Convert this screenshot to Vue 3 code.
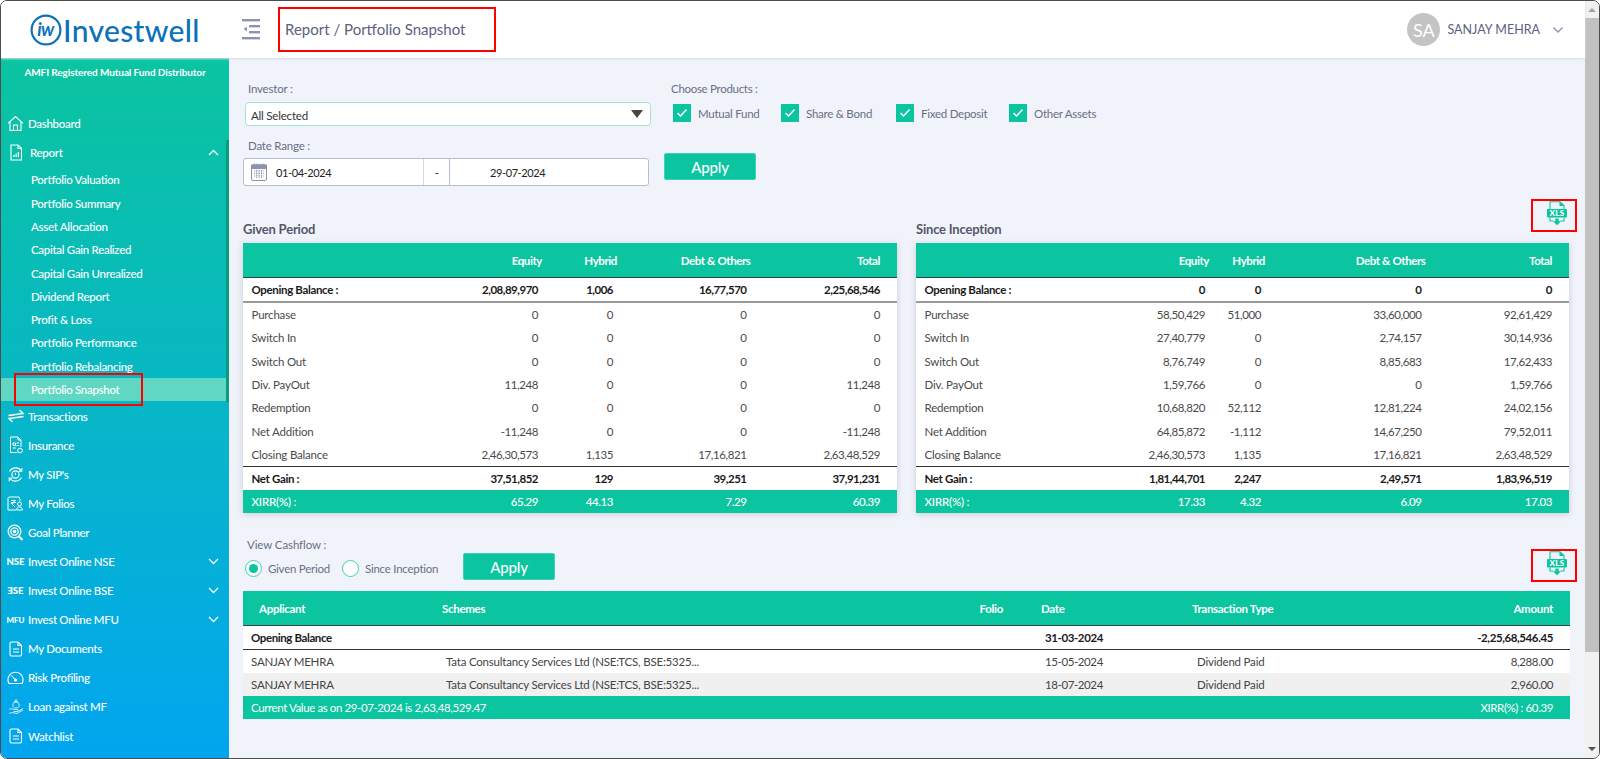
<script setup>
const subs = ['Portfolio Valuation','Portfolio Summary','Asset Allocation','Capital Gain Realized','Capital Gain Unrealized','Dividend Report','Profit & Loss','Portfolio Performance','Portfolio Rebalancing','Portfolio Snapshot']
const navBottom = [
  { t:'Transactions', i:'swap' },{ t:'Insurance', i:'ins' },{ t:"My SIP's", i:'sip' },{ t:'My Folios', i:'fol' },{ t:'Goal Planner', i:'goal' },
  { t:'Invest Online NSE', c:'NSE', chev:true },{ t:'Invest Online BSE', c:'ƎSE', chev:true },{ t:'Invest Online MFU', c:'MFU', small:true, chev:true },
  { t:'My Documents', i:'doc' },{ t:'Risk Profiling', i:'risk' },{ t:'Loan against MF', i:'loan' },{ t:'Watchlist', i:'doc' }
]
const products = ['Mutual Fund','Share & Bond','Fixed Deposit','Other Assets']
const given = {
  title:'Given Period', cls:'given',
  open:['2,08,89,970','1,006','16,77,570','2,25,68,546'],
  rows:[['Purchase','0','0','0','0'],['Switch In','0','0','0','0'],['Switch Out','0','0','0','0'],['Div. PayOut','11,248','0','0','11,248'],['Redemption','0','0','0','0'],['Net Addition','-11,248','0','0','-11,248'],['Closing Balance','2,46,30,573','1,135','17,16,821','2,63,48,529']],
  gain:['37,51,852','129','39,251','37,91,231'], xirr:['65.29','44.13','7.29','60.39']
}
const since = {
  title:'Since Inception', cls:'since',
  open:['0','0','0','0'],
  rows:[['Purchase','58,50,429','51,000','33,60,000','92,61,429'],['Switch In','27,40,779','0','2,74,157','30,14,936'],['Switch Out','8,76,749','0','8,85,683','17,62,433'],['Div. PayOut','1,59,766','0','0','1,59,766'],['Redemption','10,68,820','52,112','12,81,224','24,02,156'],['Net Addition','64,85,872','-1,112','14,67,250','79,52,011'],['Closing Balance','2,46,30,573','1,135','17,16,821','2,63,48,529']],
  gain:['1,81,44,701','2,247','2,49,571','1,83,96,519'], xirr:['17.33','4.32','6.09','17.03']
}
const tables = [given, since]
const heads = ['Equity','Hybrid','Debt & Others','Total']
const tx = [
  ['15-05-2024','8,288.00'],['18-07-2024','2,960.00']
]
</script>

<template>
  <div class="frame">
    <div class="page">
      <header class="topbar">
        <div class="logo">
          <svg width="32" height="32" viewBox="0 0 32 32" class="mark">
            <circle cx="16" cy="16" r="14.4" fill="none" stroke="#0b72b9" stroke-width="2.2"/>
            <text x="15.5" y="22" text-anchor="middle" font-family="Lato" font-style="italic" font-weight="700" font-size="18" fill="#0b72b9" letter-spacing="-.6">iw</text>
          </svg>
          <span class="brand">Investwell</span>
        </div>
        <svg class="menu" width="18" height="21" viewBox="0 0 18 21" fill="#8d93b3">
          <rect x="0" y="0" width="18" height="2.4"/><rect x="7" y="6" width="11" height="2.4"/><rect x="7" y="12" width="11" height="2.4"/><rect x="0" y="18" width="18" height="2.4"/><path d="M5 7.800v4.600l-3.500-2.300z"/>
        </svg>
        <div class="crumb-box"><span class="crumb">Report / Portfolio Snapshot</span></div>
        <div class="user">
          <span class="avatar">SA</span>
          <span class="uname">SANJAY MEHRA</span>
          <svg width="12" height="8" viewBox="0 0 12 8" fill="none" stroke="#8d93b3" stroke-width="1.4"><path d="M1.5 1.5 6 6l4.5-4.5"/></svg>
        </div>
      </header>

      <div class="body">
        <aside class="side">
          <div class="amfi">AMFI Registered Mutual Fund Distributor</div>
          <nav class="nav">
            <a class="item"><span class="ico"><svg width="17" height="17" viewBox="0 0 17 17" fill="none" stroke="#fff" stroke-width="1.1"><path d="M1 8.3 8.5 1.5 16 8.3M3 7v8.5h11V7M6.5 15.5V10h4v5.5"/></svg></span>Dashboard</a>
            <a class="item"><span class="ico"><svg width="14" height="17" viewBox="0 0 14 17" fill="none" stroke="#fff" stroke-width="1.1"><path d="M2 1h7l3.500 3.500V16H2zM9 1v3.500h3.500"/><path d="M5 13v-2M7.200 13V9.500M9.400 13V8" stroke-width="1.3"/></svg></span><span class="report-t">Report</span>
              <svg class="chev" width="11" height="7" viewBox="0 0 11 7" fill="none" stroke="#fff" stroke-width="1.3"><path d="M1 6 5.500 1.500 10 6"/></svg>
            </a>
            <div class="sub">
              <a v-for="s in subs" :key="s" class="subitem" :class="{ on: s === 'Portfolio Snapshot' }">{{ s }}<span v-if="s === 'Portfolio Snapshot'" class="mark-red"></span></a>
            </div>
            <a v-for="n in navBottom" :key="n.t" class="item">
              <span class="ico">
                <span v-if="n.c" class="code" :class="{ small: n.small }">{{ n.c }}</span>
                <svg v-else-if="n.i==='swap'" width="18" height="14" viewBox="0 0 18 14" fill="none" stroke="#fff" stroke-width="1.500"><path d="M1.500 6.500 16 4.500 12.500 1M16.500 7.500 2 9.500 5.500 13"/></svg>
                <svg v-else-if="n.i==='ins'" width="14" height="18" viewBox="0 0 14 18" fill="none" stroke="#fff" stroke-width="1"><path d="M1.500 1h7.500l3 3v7M9 1v3h3M1.500 1v15.500h7"/><path d="M4 7h2.500v2.500H4zM7.500 7H10M7.500 9.500H10M4 12h3"/><circle cx="11" cy="14.500" r="2.300"/></svg>
                <svg v-else-if="n.i==='sip'" width="17" height="17" viewBox="0 0 17 17" fill="none" stroke="#fff" stroke-width="1.100"><path d="M2.500 5.500A7 7 0 0 1 14.500 5M14.500 11.500A7 7 0 0 1 2.500 12"/><path d="M14.800 2v3.300h-3.300M2.200 15.200V12h3.300"/><circle cx="8.500" cy="8.500" r="3.600"/><path d="M8.500 6.800v2.400"/></svg>
                <svg v-else-if="n.i==='fol'" width="17" height="15" viewBox="0 0 17 15" fill="none" stroke="#fff" stroke-width="1"><path d="M9 14H1V2.500A1.500 1.500 0 0 1 2.500 1H12l1 2.500V5"/><path d="M4 4.500h5M4 6.500h5M5 4.500c3 0 3 3-.5 3L8 11"/><circle cx="12.500" cy="8" r="2"/><path d="M9.500 14c0-4 6-4 6 0z"/></svg>
                <svg v-else-if="n.i==='goal'" width="17" height="17" viewBox="0 0 17 17" fill="none" stroke="#fff" stroke-width="1.300"><circle cx="7.500" cy="7.500" r="6.300"/><circle cx="7.500" cy="7.500" r="3.700"/><circle cx="7.500" cy="7.500" r="1.200" fill="#fff"/><path d="M11.500 12 15.500 16" stroke-width="2.200"/></svg>
                <svg v-else-if="n.i==='doc'" width="14" height="16" viewBox="0 0 14 16" fill="none" stroke="#fff" stroke-width="1.100"><path d="M2.500 1H9l3.500 3.500V13.500A1.500 1.500 0 0 1 11 15H2.500A1.500 1.500 0 0 1 1 13.500v-11A1.500 1.500 0 0 1 2.500 1zM9 1v3.500h3.500M4 8h6M4 11h6"/></svg>
                <svg v-else-if="n.i==='risk'" width="17" height="14" viewBox="0 0 17 14" fill="none" stroke="#fff" stroke-width="1.100"><path d="M2 12.500A7.500 7.500 0 1 1 15 12.500z"/><path d="M4.500 4.500 8 8.500"/><circle cx="8.500" cy="9" r="1" fill="#fff"/></svg>
                <svg v-else width="16" height="17" viewBox="0 0 16 17" fill="none" stroke="#fff" stroke-width=".9" opacity=".85"><path d="M8 1.500 6.500 4h3zM6.500 4C4 6.500 4 10 8 10s4-3.500 1.500-6z"/><path d="M1 11.500c2-1.500 3.500-.5 5 0h3.500c1 0 1 1.500 0 1.500M15 10.500 10 13.500H5.500M1 15.500l3-1 5 1 6-3.500"/></svg>
              </span>
              {{ n.t }}
              <svg v-if="n.chev" class="chev" width="11" height="7" viewBox="0 0 11 7" fill="none" stroke="#fff" stroke-width="1.300"><path d="M1 1 5.500 5.500 10 1"/></svg>
            </a>
          </nav>
          <span class="side-scroll"></span>
        </aside>

        <main class="content">
          <section class="filters">
            <div class="f-col">
              <label class="lbl lbl-inv">Investor :</label>
              <div class="select">All Selected<span class="caret"></span></div>
              <label class="lbl lbl-date">Date Range :</label>
              <div class="dates">
                <svg width="16" height="18" viewBox="0 0 16 18" class="cal"><rect x=".5" y="2" width="15" height="15.500" rx="1.500" fill="none" stroke="#8d93ad"/><path d="M.5 2h15v3.500H.5zM3 .5v3M6 .5v3M9 .5v3M12 .5v3" stroke="#8d93ad" fill="#8d93ad"/><path d="M3 8h10M3 10.500h10M3 13h10M5.500 7v8M8 7v8M10.500 7v8" stroke="#8d93ad" stroke-width=".9" stroke-dasharray="1.300 1"/></svg>
                <span class="d1">01-04-2024</span>
                <span class="dash">-</span>
                <span class="d2">29-07-2024</span>
              </div>
            </div>
            <div class="f-right">
              <label class="lbl lbl-prod">Choose Products :</label>
              <div class="checks">
                <span v-for="p in products" :key="p" class="check">
                  <span class="box"><svg width="12" height="10" viewBox="0 0 12 10" fill="none" stroke="#fff" stroke-width="1.500"><path d="M1.500 5 4.500 8l6-6.500"/></svg></span>{{ p }}
                </span>
              </div>
              <button class="apply apply-top">Apply</button>
            </div>
          </section>

          <div class="xls-row xls-1">
            <span class="red-box">
              <svg class="xls" width="20" height="25" viewBox="0 0 20 25">
                <path d="M3 8V.7h10L17 4.500V8" fill="none" stroke="#0bc5a0" stroke-width="1.100"/>
                <path d="M12.500 .5 17 5h-4.500z" fill="#0bc5a0"/>
                <rect x="0" y="8" width="20" height="8.500" rx="1" fill="#0bc5a0"/>
                <text x="10" y="15.300" text-anchor="middle" font-family="Lato" font-weight="900" font-size="8" fill="#fff" letter-spacing=".3">XLS</text>
                <path d="M3 16.500v3.500h3.500M17 16.500v3.500h-3.500" fill="none" stroke="#0bc5a0" stroke-width="1.100"/>
                <path d="M8.300 17.500h3.400v2.700h2.300l-4 4-4-4h2.300z" fill="#0bc5a0"/>
              </svg>
            </span>
          </div>

          <section class="duo">
            <div v-for="t in tables" :key="t.title" class="block">
              <h3 class="btitle">{{ t.title }}</h3>
              <table class="sum" :class="t.cls">
                <thead>
                  <tr><th class="first"></th><th v-for="h in heads" :key="h" class="num col" :class="'c-' + h[0]">{{ h }}</th></tr>
                </thead>
                <tbody>
                  <tr class="strong open"><td class="first">Opening Balance :</td><td v-for="(v,i) in t.open" :key="i" class="num" :class="'c-' + heads[i][0]">{{ v }}</td></tr>
                  <tr v-for="r in t.rows" :key="r[0]" class="plain">
                    <td class="first">{{ r[0] }}</td><td v-for="(v,i) in r.slice(1)" :key="i" class="num" :class="'c-' + heads[i][0]">{{ v }}</td>
                  </tr>
                  <tr class="strong gain"><td class="first">Net Gain :</td><td v-for="(v,i) in t.gain" :key="i" class="num" :class="'c-' + heads[i][0]">{{ v }}</td></tr>
                  <tr class="xirr"><td class="first">XIRR(%) :</td><td v-for="(v,i) in t.xirr" :key="i" class="num" :class="'c-' + heads[i][0]">{{ v }}</td></tr>
                </tbody>
              </table>
            </div>
          </section>

          <section class="cash">
            <div class="cash-left">
              <label class="lbl lbl-cash">View Cashflow :</label>
              <div class="radios">
                <span class="radio on"></span><span class="rlabel r1">Given Period</span>
                <span class="radio"></span><span class="rlabel">Since Inception</span>
              </div>
            </div>
            <button class="apply apply-cash">Apply</button>
            <span class="red-box red-2">
              <svg class="xls" width="20" height="25" viewBox="0 0 20 25">
                <path d="M3 8V.7h10L17 4.500V8" fill="none" stroke="#0bc5a0" stroke-width="1.100"/>
                <path d="M12.500 .5 17 5h-4.500z" fill="#0bc5a0"/>
                <rect x="0" y="8" width="20" height="8.500" rx="1" fill="#0bc5a0"/>
                <text x="10" y="15.300" text-anchor="middle" font-family="Lato" font-weight="900" font-size="8" fill="#fff" letter-spacing=".3">XLS</text>
                <path d="M3 16.500v3.500h3.500M17 16.500v3.500h-3.500" fill="none" stroke="#0bc5a0" stroke-width="1.100"/>
                <path d="M8.300 17.500h3.400v2.700h2.300l-4 4-4-4h2.300z" fill="#0bc5a0"/>
              </svg>
            </span>
          </section>

          <table class="flow">
            <thead>
              <tr>
                <th class="f-app">Applicant</th><th class="f-sch">Schemes</th><th class="f-fol">Folio</th><th class="f-date">Date</th><th class="f-type">Transaction Type</th><th class="f-amt">Amount</th>
              </tr>
            </thead>
            <tbody>
              <tr class="op"><td colspan="3" class="f-cell">Opening Balance</td><td class="f-cell f-d">31-03-2024</td><td></td><td class="f-cell f-amt-td">-2,25,68,546.45</td></tr>
              <tr v-for="(r,i) in tx" :key="i" class="tr" :class="{ alt: i === 1 }">
                <td class="f-cell">SANJAY MEHRA</td><td class="f-cell f-s">Tata Consultancy Services Ltd (NSE:TCS, BSE:5325...</td><td></td>
                <td class="f-cell f-d">{{ r[0] }}</td><td class="f-cell f-t">Dividend Paid</td><td class="f-cell f-amt-td">{{ r[1] }}</td>
              </tr>
              <tr class="foot"><td colspan="4" class="f-cell">Current Value as on 29-07-2024 is 2,63,48,529.47</td><td colspan="2" class="f-cell f-amt-td">XIRR(%) : 60.39</td></tr>
            </tbody>
          </table>
        </main>
      </div>
    </div>
    <div class="scrollbar">
      <span class="up"></span>
      <span class="thumb"></span>
      <span class="down"></span>
    </div>
  </div>
</template>

<style>
html, body { margin: 0; background: #fff; overflow: hidden; }
</style>

<style scoped>
.frame { width: 1600px; height: 759px; box-sizing: border-box; border: 1px solid #4d4d4d; border-radius: 7px; overflow: hidden; display: flex; font-family: Lato, "Liberation Sans", sans-serif; background: #f1f1f1; }
.page { width: 1584px; display: flex; flex-direction: column; height: 757px; }
.topbar { height: 57px; background: #fff; display: flex; align-items: center; box-shadow: 0 1px 2px #d5d9ea; position: relative; z-index: 2; flex: none; }
.logo { display: flex; align-items: center; margin-left: 29px; width: 212px; height: 40px; }
.mark { flex: none; }
.brand { font-size: 30px; font-weight: 500; color: #0b72b9; line-height: 1; margin-left: 1px; letter-spacing: .35px; }
.menu { flex: none; }
.crumb-box { margin-left: 18px; width: 218px; height: 45px; box-sizing: border-box; border: 2px solid #f00; display: flex; align-items: center; padding-left: 5px; margin-top: -1px; }
.crumb { font-size: 15px; color: #5d6181; white-space: nowrap; }
.user { margin-left: auto; display: flex; align-items: center; padding-right: 21px; }
.avatar { width: 33px; height: 33px; border-radius: 50%; background: #c4c4c4; color: #fff; font-size: 18px; display: flex; align-items: center; justify-content: center; }
.uname { font-size: 12.500px; color: #5d6181; margin: 0 12px 0 7px; }

.body { flex: 1; display: flex; min-height: 0; }
.side { width: 228px; flex: none; background: linear-gradient(180deg, #0bc4a0 0%, #06b4cf 60%, #01a5ef 100%); position: relative; color: #fff; }
.amfi { font-size: 10px; font-weight: 700; text-align: center; padding-top: 8px; line-height: 13px; letter-spacing: -.1px; }
.nav { margin-top: 30px; }
.item { height: 29.100px; display: flex; align-items: center; font-size: 11.500px; font-weight: 500; position: relative; white-space: nowrap; letter-spacing: -.3px; }
.ico { width: 27px; display: flex; justify-content: center; padding-left: 2px; box-sizing: border-box; flex: none; }
.report-t { margin-left: 2px; }
.chev { position: absolute; left: 207px; top: 11px; }
.code { font-size: 9.500px; font-weight: 900; letter-spacing: 0; }
.code.small { font-size: 8px; }
.sub { display: block; margin-top: 1px; }
.subitem { display: block; height: 23.330px; line-height: 23.330px; padding-left: 30px; font-size: 11.500px; font-weight: 500; position: relative; width: 225px; box-sizing: border-box; letter-spacing: -.3px; }
.subitem.on { background: #5fd7c3; }
.mark-red { position: absolute; left: 13px; top: -5px; width: 129px; height: 33px; box-sizing: border-box; border: 2px solid #f00; }
.side-scroll { position: absolute; left: 225px; top: 82px; width: 3px; height: 262px; background: #0a9b7b; }

.content { flex: 1; background: #f0f3f9; padding: 0 15px 0 14px; min-width: 0; }
.filters { display: flex; height: 126px; }
.f-col { width: 428px; flex: none; }
.lbl { display: block; font-size: 11.500px; color: #6b6f85; line-height: 16px; letter-spacing: -.2px; }
.lbl-inv { padding: 23px 0 5px 5px; }
.select { margin-left: 2px; width: 406px; height: 24px; box-sizing: border-box; border: 1px solid #a5e3d4; border-radius: 4px; background: #fff; font-size: 11.500px; letter-spacing: -.2px; color: #333; line-height: 25px; padding-left: 5px; position: relative; }
.caret { position: absolute; right: 7px; top: 7px; border: 6px solid transparent; border-top: 8px solid #444; border-bottom: 0; }
.lbl-date { padding: 12px 0 4px 5px; }
.dates { width: 406px; height: 28px; box-sizing: border-box; border: 1px solid #b4bdd6; border-radius: 3px; background: #fff; display: flex; align-items: center; font-size: 11px; letter-spacing: -.4px; color: #222; }
.cal { margin-left: 7px; flex: none; }
.d1 { margin-left: 9px; width: 147px; }
.dash { width: 27px; align-self: stretch; display: flex; align-items: center; justify-content: center; border-left: 1px solid #d3d9e8; border-right: 1px solid #b4bdd6; box-sizing: border-box; }
.d2 { margin-left: 40px; }
.f-right { position: relative; flex: 1; }
.lbl-prod { padding: 23px 0 0 0; letter-spacing: -.3px; }
.checks { display: flex; padding-top: 7px; margin-left: 2px; }
.check { display: inline-flex; align-items: center; font-size: 11.500px; letter-spacing: -.25px; color: #6b6f85; white-space: nowrap; }
.check:nth-child(1) { width: 108px; }
.check:nth-child(2) { width: 115px; }
.check:nth-child(3) { width: 113px; }
.box { width: 18px; height: 18px; background: #0bc5a0; display: flex; align-items: center; justify-content: center; margin-right: 7px; }
.apply { background: #0bc5a0; color: #fff; font-family: inherit; font-size: 15px; letter-spacing: -.2px; font-weight: 500; border: 1px solid #3ad3b3; border-radius: 2px; width: 92px; height: 27px; padding: 0; display: block; }
.apply-top { margin: 31px 0 0 -7px; }

.xls-row { height: 0; position: relative; }
.red-box { position: absolute; width: 46px; height: 33px; box-sizing: border-box; border: 2px solid #f00; display: block; }
.xls-1 .red-box { left: 1288px; top: 15px; }
.xls { position: absolute; left: 14px; top: 0; }

.duo { display: flex; gap: 19px; padding-top: 34px; }
.block { width: 653px; }
.block:first-child { width: 654px; }
.btitle { margin: 0; font-size: 13px; font-weight: 700; color: #55586a; height: 25px; line-height: 22px; letter-spacing: -.2px; }
.sum { border-collapse: separate; border-spacing: 0; width: 100%; table-layout: fixed; box-shadow: 0 1px 6px rgba(120,130,150,.35); background: #fff; font-size: 11.500px; letter-spacing: -.2px; color: #4a4a4a; }
.sum th, .sum td { box-sizing: border-box; }
.sum th { background: #0bc5a0; color: #fff; font-weight: 700; font-size: 11.500px; height: 35px; border-bottom: 1px solid #33474a; padding: 0; letter-spacing: -.4px; }
.sum td { height: 23.330px; padding: 0; }
.first { text-align: left; padding-left: 8.500px !important; }
.num { text-align: right; }
.given .first { width: 219px; }
.given .c-E { width: 93px; } .given .c-H { width: 75px; } .given .c-D { width: 133.500px; } .given .c-T { width: 133.500px; }
.since .first { width: 212px; }
.since .c-E { width: 94px; } .since .c-H { width: 56px; } .since .c-D { width: 160.500px; } .since .c-T { width: 130.500px; }
.sum td.num { padding-right: 17px; letter-spacing: -.42px; }
.sum th.num { padding-right: 13px; }
.sum th.c-T { padding-right: 17px; }
.strong td { color: #1a1a1a; font-weight: 700; letter-spacing: -.35px; }
.sum .strong td.num { letter-spacing: -.5px; }
.open td { height: 25px; border-bottom: 2px solid #9a9a9a; }
.gain td { height: 24px; border-top: 1px solid #333; }
.xirr td { background: #0bc5a0; color: #fff; height: 23px; font-weight: 500; }

.cash { display: flex; height: 78px; position: relative; }
.lbl-cash { padding: 24px 0 0 4px; font-size: 11.500px; letter-spacing: -.1px; }
.cash-left { width: 220px; }
.radios { display: flex; align-items: center; margin-top: 7px; margin-left: 2px; }
.radio { width: 17px; height: 17px; box-sizing: border-box; border: 1px solid #3fd0b2; border-radius: 50%; background: #fff; flex: none; position: relative; }
.radio.on::after { content: ''; position: absolute; left: 3px; top: 3px; width: 9px; height: 9px; border-radius: 50%; background: #0bc5a0; }
.rlabel { font-size: 11.500px; letter-spacing: -.25px; color: #6b6f85; margin-left: 6px; white-space: nowrap; }
.r1 { width: 74px; }
.apply-cash { margin-top: 40px; }
.red-2 { left: 1288px; top: 36px; }

.flow { width: 1327px; border-collapse: separate; border-spacing: 0; table-layout: fixed; font-size: 11.500px; letter-spacing: -.2px; color: #444; background: #fff; }
.flow th { background: #0bc5a0; color: #fff; font-weight: 700; height: 34px; font-size: 11.500px; text-align: left; border-bottom: 1px solid #33474a; padding: 0; letter-spacing: -.3px; }
.f-app { width: 199px; padding-left: 16px !important; box-sizing: border-box; }
.f-sch { width: 500px; }
.f-fol { width: 61px; text-align: right !important; }
.f-date { width: 189px; padding-left: 38px !important; box-sizing: border-box; }
.f-type { width: 161px; }
.f-amt { text-align: right !important; padding-right: 17px !important; }
.f-cell { padding: 0 8px; height: 23px; white-space: nowrap; }
.f-s { padding-left: 4px; overflow: visible; }
.f-d { padding-left: 42px; letter-spacing: -.4px; }
.f-t { padding-left: 5px; }
.f-amt-td { text-align: right; padding-right: 17px; letter-spacing: -.4px; }
.op td { color: #1a1a1a; font-weight: 700; letter-spacing: -.4px; border-bottom: 1px solid #333; }
.alt td { background: #f0f0f0; }
.foot td { background: #0bc5a0; color: #fff; height: 23px; letter-spacing: -.4px; }

.scrollbar { width: 14px; flex: none; height: 757px; display: flex; flex-direction: column; align-items: center; background: #f1f1f1; }
.up, .down { width: 0; height: 0; border: 4px solid transparent; flex: none; }
.up { border-bottom: 4px solid #a3a3a3; border-top: 0; margin: 7px 0 6px; }
.thumb { width: 100%; height: 634px; background: #c1c1c1; flex: none; }
.down { border-top: 4px solid #505050; border-bottom: 0; margin-top: auto; margin-bottom: 7px; }
</style>
